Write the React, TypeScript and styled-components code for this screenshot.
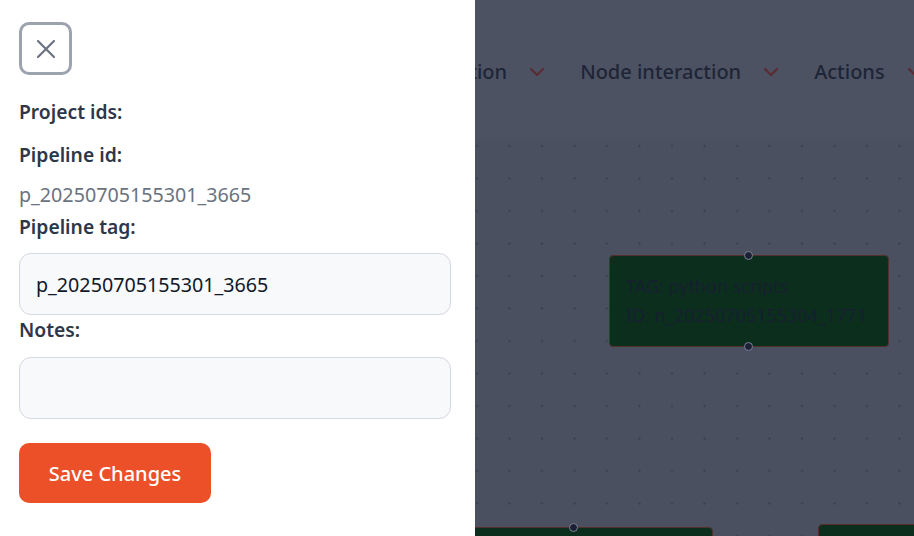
import styled, { createGlobalStyle } from "styled-components";

const GlobalStyle = createGlobalStyle`
	html, body {
		margin: 0;
		padding: 0;
		width: 914px;
		height: 536px;
		overflow: hidden;
		font-family: "Noto Sans", "Open Sans", sans-serif;
	}
	* {
		box-sizing: border-box;
	}
`;

const Page = styled.div`
	position: relative;
	width: 914px;
	height: 536px;
	overflow: hidden;
	display: flex;
	flex-direction: column;
	background: #4a5060;
`;

const Header = styled.header`
	height: 140px;
	flex-shrink: 0;
	background: #4c5262;
	display: flex;
	align-items: flex-start;
	padding-top: 53px;
	padding-left: 347px;
	overflow: hidden;
`;

const Nav = styled.nav`
	display: flex;
	align-items: center;
	gap: 35px;
	white-space: nowrap;
`;

const NavItem = styled.div`
	display: flex;
	align-items: center;
	gap: 22px;
	font-size: 20px;
	font-weight: 500;
	line-height: 38px;
	color: #1e2536;
`;

const Chevron = styled.svg`
	width: 16px;
	height: 16px;
	flex-shrink: 0;
	color: #5a2b33;
`;

const Canvas = styled.div`
	position: relative;
	flex: 1;
	background-color: #4a5060;
	background-image: radial-gradient(circle, #3e4351 1px, transparent 1.4px);
	background-size: 32.5px 32.5px;
	background-position: 5.75px -10.25px;
`;

const FlowNode = styled.div<{ $x: number; $y: number; $w: number; $h: number }>`
	position: absolute;
	left: ${(p) => p.$x}px;
	top: ${(p) => p.$y}px;
	width: ${(p) => p.$w}px;
	height: ${(p) => p.$h}px;
	background: #0b2e1d;
	border: 1px solid #55302b;
	border-radius: 4px;
	padding: 16px 16px;
	font-size: 18px;
	line-height: 29px;
	color: #172030;
	white-space: nowrap;
`;

const Handle = styled.span<{ $side: "top" | "bottom"; $left: number }>`
	position: absolute;
	left: ${(p) => p.$left}px;
	${(p) => (p.$side === "top" ? "top: -5px;" : "bottom: -5px;")}
	width: 9px;
	height: 9px;
	border-radius: 50%;
	background: #1b2034;
	border: 1px solid #7d8394;
`;

const Drawer = styled.aside`
	position: absolute;
	left: 0;
	top: 0;
	bottom: 0;
	width: 475px;
	background: #ffffff;
	padding: 22px 24px 0 19px;
	display: flex;
	flex-direction: column;
	align-items: flex-start;
`;

const CloseButton = styled.button`
	width: 53px;
	height: 53px;
	border: 3px solid #9ca3af;
	border-radius: 10px;
	background: #ffffff;
	display: flex;
	align-items: center;
	justify-content: center;
	padding: 0;
	margin-bottom: 23px;
	color: #6b7280;
	cursor: pointer;
`;

const Label = styled.div<{ $gap?: number }>`
	font-size: 19.3px;
	font-weight: 600;
	line-height: 28px;
	color: #2d3748;
	margin-bottom: ${(p) => p.$gap ?? 0}px;
`;

const Value = styled.div`
	font-size: 19.7px;
	line-height: 28px;
	color: #6b7280;
	margin-bottom: 4px;
`;

const TextInput = styled.input<{ $top: number; $gap?: number }>`
	width: 100%;
	height: 62px;
	border: 1px solid #d4d8de;
	border-radius: 12px;
	background: #f8f9fb;
	padding: 0 16px;
	font-family: inherit;
	font-size: 19.7px;
	color: #111827;
	margin-top: ${(p) => p.$top}px;
	margin-bottom: ${(p) => p.$gap ?? 0}px;
	outline: none;
`;

const SaveButton = styled.button`
	margin-top: 24px;
	width: 192px;
	height: 60px;
	border: none;
	border-radius: 10px;
	background: #eb5028;
	color: #ffffff;
	font-family: inherit;
	font-size: 20px;
	font-weight: 500;
	cursor: pointer;
`;

const ChevronIcon = () => (
	<Chevron viewBox="0 0 16 16" fill="none">
		<path d="M2 5l6 6 6-6" stroke="currentColor" strokeWidth="2.2" strokeLinecap="round" strokeLinejoin="round" />
	</Chevron>
);

const navItems = ["Pipeline creation", "Node interaction", "Actions"];

export default function App() {
	return (
		<>
			<GlobalStyle />
			<Page>
				<Header>
					<Nav>
						{navItems.map((item) => (
							<NavItem key={item}>
								{item}
								<ChevronIcon />
							</NavItem>
						))}
					</Nav>
				</Header>
				<Canvas>
					<FlowNode $x={609} $y={115} $w={280} $h={92}>
						<Handle $side="top" $left={134} />
						TAG: python scripts
						<br />
						ID: n_20250705155304_1771
						<Handle $side="bottom" $left={134} />
					</FlowNode>
					<FlowNode $x={380} $y={387} $w={333} $h={80}>
						<Handle $side="top" $left={188} />
					</FlowNode>
					<FlowNode $x={818} $y={384} $w={200} $h={80} />
				</Canvas>
				<Drawer>
					<CloseButton aria-label="Close">
						<svg width="24" height="24" viewBox="0 0 24 24" fill="none">
							<path d="M4 4l16 16M20 4L4 20" stroke="currentColor" strokeWidth="2.2" strokeLinecap="round" />
						</svg>
					</CloseButton>
					<Label $gap={15}>Project ids:</Label>
					<Label $gap={12}>Pipeline id:</Label>
					<Value>p_20250705155301_3665</Value>
					<Label>Pipeline tag:</Label>
					<TextInput $top={12} $gap={1} defaultValue="p_20250705155301_3665" />
					<Label>Notes:</Label>
					<TextInput $top={13} />
					<SaveButton>Save Changes</SaveButton>
				</Drawer>
			</Page>
		</>
	);
}
